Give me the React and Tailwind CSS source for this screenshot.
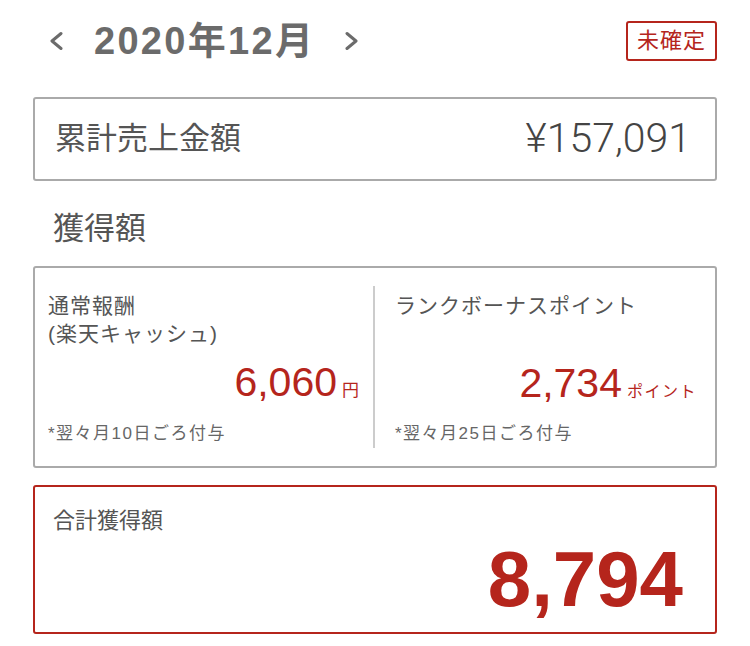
const jp = "font-['Liberation_Sans','Noto_Sans_CJK_JP',sans-serif]";

function Chevron({ dir }) {
  return (
    <svg width="14" height="20" viewBox="0 0 14 20" fill="none" stroke="currentColor" strokeWidth="3" strokeLinecap="round" strokeLinejoin="round">
      {dir === "left" ? <polyline points="12,2.5 3,10 12,17.5" /> : <polyline points="2,2.5 11,10 2,17.5" />}
    </svg>
  );
}

export default function App() {
  return (
    <div className={`min-h-screen bg-white ${jp} text-[#555]`}>
      <div className="px-[33px] pt-[22px] pb-4 w-[750px]">
        {/* month header */}
        <header className="flex items-center justify-between h-[38px]">
          <div className="flex items-center text-[#6b6b6b]">
            <span className="ml-[16px]">
              <Chevron dir="left" />
            </span>
            <h1 className="ml-[31px] text-[38px] font-bold tracking-[2.3px] leading-none">2020年12月</h1>
            <span className="ml-[30px]">
              <Chevron dir="right" />
            </span>
          </div>
          <span className="border-2 border-[#b5251c] rounded-[3px] text-[#b5251c] text-[22px] tracking-[1px] leading-none px-[9px] pt-[7px] pb-[7px]">
            未確定
          </span>
        </header>

        {/* cumulative sales */}
        <section className="mt-[37px] h-[84px] border-2 border-[#aaa] rounded-[3px] flex items-center justify-between pl-[20px] pr-[24px]">
          <span className="text-[31px] text-[#555]">累計売上金額</span>
          <span className="text-[41px] text-[#444] font-['Roboto',sans-serif] font-light">¥157,091</span>
        </section>

        <h2 className="mt-[30px] ml-[20px] text-[31px] text-[#555] leading-[36px]">獲得額</h2>

        {/* breakdown */}
        <section className="mt-[19px] h-[202px] border-2 border-[#aaa] rounded-[3px] grid grid-cols-2 py-[18px]">
          <div className="flex flex-col pl-[13px] pr-[14px] border-r-2 border-[#ccc]">
            <p className="text-[21px] tracking-[1px] leading-[28px] text-[#555] mt-[6px]">
              通常報酬
              <br />
              (楽天キャッシュ)
            </p>
            <div className="mt-auto flex items-baseline justify-end text-[#b5251c]">
              <span className="text-[41px] leading-none">6,060</span>
              <span className="text-[17px] ml-[5px]">円</span>
            </div>
            <p className="mt-[17px] text-[17px] tracking-[1.5px] text-[#666] mb-[2px]">*翌々月10日ごろ付与</p>
          </div>
          <div className="flex flex-col pl-[20px] pr-[18px]">
            <p className="text-[21px] tracking-[1px] leading-[28px] text-[#555] mt-[6px]">ランクボーナスポイント</p>
            <div className="mt-auto flex items-baseline justify-end text-[#b5251c]">
              <span className="text-[41px] leading-none">2,734</span>
              <span className="text-[16px] tracking-[1.5px] ml-[5px]">ポイント</span>
            </div>
            <p className="mt-[17px] text-[17px] tracking-[1.5px] text-[#666] mb-[2px]">*翌々月25日ごろ付与</p>
          </div>
        </section>

        {/* total */}
        <section className="mt-[17px] h-[149px] border-2 border-[#b5251c] rounded-[3px] flex flex-col px-[18px] pt-[20px]">
          <span className="text-[22px] text-[#555] leading-[28px]">合計獲得額</span>
          <span className="self-end mr-[14px] mt-[5px] text-[78px] font-bold leading-none text-[#b5251c]">8,794</span>
        </section>
      </div>
    </div>
  );
}
